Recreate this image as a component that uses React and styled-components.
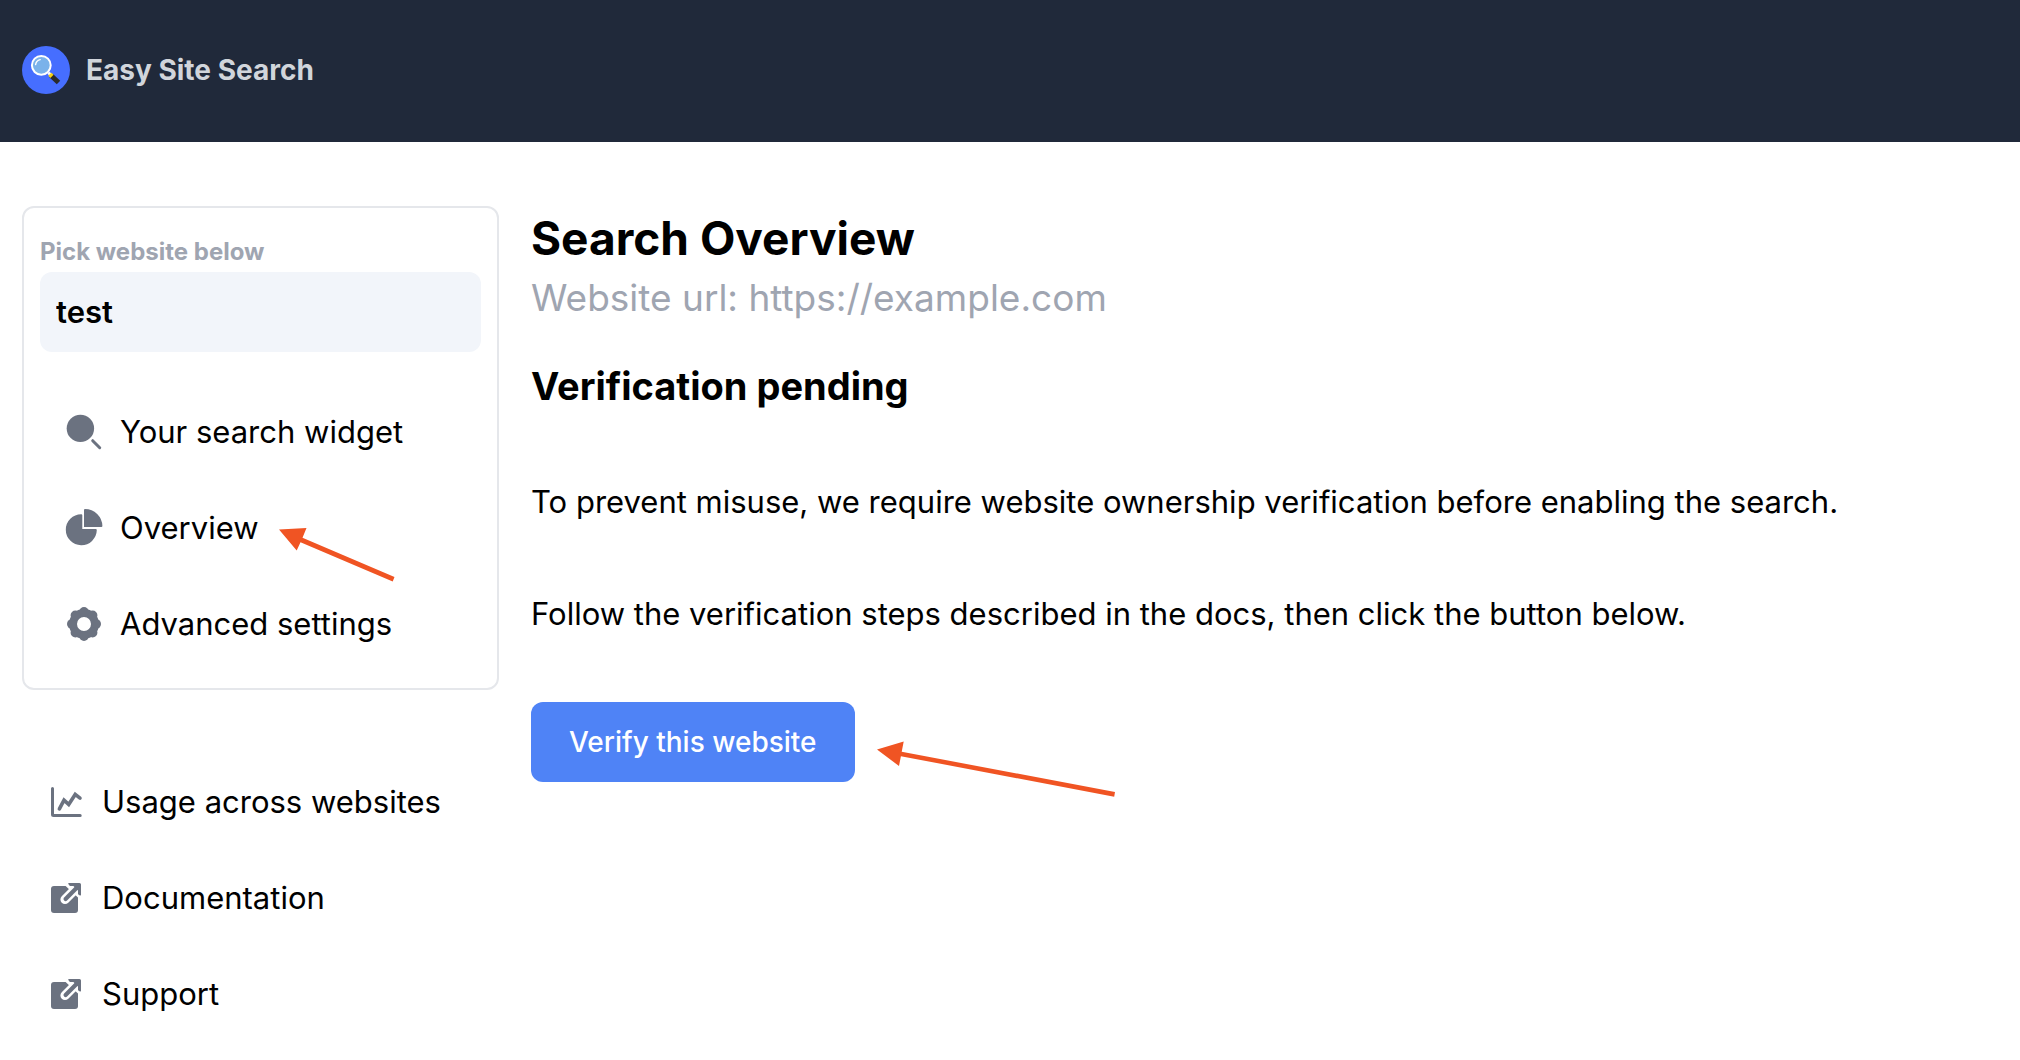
import React, {useState} from 'react';
// style
import styled, {createGlobalStyle} from 'styled-components';

const App = () => {
    const [website, setWebsite] = useState('test');

    return (
        <>
            <GlobalStyle />
            <Header>
                <Brand href="#">
                    <Logo />
                    <span>Easy Site Search</span>
                </Brand>
            </Header>
            <Page>
                <Sidebar>
                    <Card>
                        <Label htmlFor="website">Pick website below</Label>
                        <Select id="website" value={website} onChange={(e) => setWebsite(e.target.value)}>
                            <option value="test">test</option>
                        </Select>
                        <Nav aria-label="Website">
                            <NavLink href="#widget">
                                <SearchIcon />
                                Your search widget
                            </NavLink>
                            <NavLink href="#overview">
                                <PieIcon />
                                <Pointed>
                                    Overview
                                    <SmallArrow />
                                </Pointed>
                            </NavLink>
                            <NavLink href="#settings">
                                <GearIcon />
                                Advanced settings
                            </NavLink>
                        </Nav>
                    </Card>
                    <nav aria-label="Account">
                        <NavLink href="#usage">
                            <ChartIcon />
                            Usage across websites
                        </NavLink>
                        <NavLink href="#docs">
                            <ExternalIcon />
                            Documentation
                        </NavLink>
                        <NavLink href="#support">
                            <ExternalIcon />
                            Support
                        </NavLink>
                    </nav>
                </Sidebar>
                <Main>
                    <Title>Search Overview</Title>
                    <Url>Website url: https://example.com</Url>
                    <Subtitle>Verification pending</Subtitle>
                    <Text>To prevent misuse, we require website ownership verification before enabling the search.</Text>
                    <Text>Follow the verification steps described in the docs, then click the button below.</Text>
                    <Pointed>
                        <Button type="button">Verify this website</Button>
                        <LongArrow />
                    </Pointed>
                </Main>
            </Page>
        </>
    );
};

// Icons
const Logo = () => (
    <svg width="48" height="48" viewBox="0 0 48 48" aria-hidden="true">
        <circle cx="24" cy="24" r="24" fill="#466eff" />
        <path d="M29 29.5l7.5 7" stroke="#2b2b2b" strokeWidth="5" />
        <path d="M26.5 26.8l2 2" stroke="#fff" strokeWidth="3" />
        <path d="M27.8 28.2l2.2 2.2" stroke="#f5d216" strokeWidth="4.4" />
        <circle cx="19.3" cy="19.3" r="9.4" fill="#7ab2ea" stroke="#fff" strokeWidth="2" />
        <path d="M13.6 18.6a6 6 0 0 1 4.6-5" stroke="#fff" strokeWidth="1.4" fill="none" strokeLinecap="round" />
    </svg>
);

const SearchIcon = () => (
    <Icon viewBox="0 0 40 40" aria-hidden="true">
        <circle cx="16.4" cy="16.4" r="13.7" />
        <path d="M28.7 28.7l7 7" stroke="currentColor" strokeWidth="3" strokeLinecap="round" />
    </Icon>
);

const PieIcon = () => (
    <Icon viewBox="0 0 40 40" aria-hidden="true">
        <path d="M17.2 6.2a1.1 1.1 0 0 1 1.1 1.1V21h13.4a1.1 1.1 0 0 1 1.1 1.1A15.5 15.5 0 1 1 17.2 6.2z" />
        <path d="M20 2a1 1 0 0 1 1-1 17.4 17.4 0 0 1 17.4 17 1 1 0 0 1-1 1H20z" />
    </Icon>
);

const GearIcon = () => (
    <Icon viewBox="0 0 40 40" aria-hidden="true">
        <circle cx="20" cy="20" r="11" fill="none" stroke="currentColor" strokeWidth="8" />
        {[0, 45, 90, 135, 180, 225, 270, 315].map((angle) => (
            <circle key={angle} cx="20" cy="7.800" r="4.800" transform={`rotate(${angle} 20 20)`} />
        ))}
    </Icon>
);

const ChartIcon = () => (
    <Icon viewBox="0 0 40 40" aria-hidden="true">
        <g fill="none" stroke="currentColor" strokeWidth="3" strokeLinecap="round" strokeLinejoin="round">
            <path d="M6.5 6.5v26a1 1 0 0 0 1 1h26.700" />
            <path d="M13.400 26.800l4.600-8.600 4.700 4.200L29.200 12.400l4.800 3.800" strokeWidth="3.600" strokeLinejoin="miter" />
        </g>
    </Icon>
);

const ExternalIcon = () => (
    <Icon viewBox="0 0 40 40" aria-hidden="true">
        <rect x="5" y="8" width="27" height="27" rx="3" />
        <path d="M19 21.5L33 7.5" stroke="#fff" strokeWidth="9.200" strokeLinecap="round" />
        <path d="M19.6 8h12.4v11.5z" fill="#fff" />
        <path d="M19.600 21L32 8.600" stroke="currentColor" strokeWidth="4.200" strokeLinecap="round" />
        <path d="M22.2 5h11.3a1.5 1.5 0 0 1 1.5 1.5v10.8q-2 .6-3-1.3v-3.4L27.400 8H24q-1.600-1-1.800-3z" />
    </Icon>
);

const SmallArrow = () => (
    <Arrow width="116" height="54" $top={24} $gap={20} viewBox="0 0 116 54" aria-hidden="true">
        <path d="M0 1.500L27.500 0l-4 9.800L115.500 49l-1.800 4.400L21.500 14.200 17.700 22.600z" />
    </Arrow>
);

const LongArrow = () => (
    <Arrow width="238" height="56" $top={39} $gap={22} viewBox="0 0 238 56" aria-hidden="true">
        <path d="M0 8.500L26.700 0.500l-2 10.300L238 51l-.8 4.700L23.900 15.200 22 25z" />
    </Arrow>
);

const GlobalStyle = createGlobalStyle`
    * {
        box-sizing: border-box;
        margin: 0;
        padding: 0;
    }
    body {
        background: #fff;
        color: #000;
        font-family: Inter, 'Liberation Sans', sans-serif;
        font-size: 31px;
        line-height: 48px;
    }
    a {
        color: inherit;
        text-decoration: none;
    }
`;

const Header = styled.header`
    padding: 46px 22px 48px;
    background: #20293a;
`;

const Brand = styled.a`
    display: inline-flex;
    align-items: center;
    gap: 16px;
    vertical-align: top;
    color: #d1d5db;
    font-size: 28px;
    font-weight: 700;
`;

const Page = styled.div`
    display: flex;
    align-items: flex-start;
    gap: 32px;
    padding: 64px 22px 0;
`;

const Sidebar = styled.aside`
    display: flex;
    flex-direction: column;
    flex: 0 0 477px;
    gap: 64px;
`;

const Card = styled.div`
    padding: 16px;
    border: 2px solid #e5e7eb;
    border-radius: 12px;
`;

const Label = styled.label`
    display: block;
    padding-top: 8px;
    color: #9fa5b1;
    font-size: 24px;
    font-weight: 700;
    line-height: 40px;
`;

const Select = styled.select`
    display: block;
    width: 100%;
    height: 80px;
    padding: 0 16px;
    appearance: none;
    border: none;
    border-radius: 12px;
    background: #f2f5fa;
    color: #000;
    font: inherit;
    font-weight: 600;
`;

const Nav = styled.nav`
    margin-top: 32px;
`;

const NavLink = styled.a`
    display: flex;
    align-items: center;
    gap: 16px;
    height: 96px;
    padding: 0 24px;
    white-space: nowrap;
`;

const Icon = styled.svg`
    flex: none;
    width: 40px;
    height: 40px;
    color: #6b7280;
    fill: currentColor;
`;

const Main = styled.main`
    flex: 1;
    min-width: 0;
`;

const Title = styled.h1`
    font-size: 46px;
    font-weight: 700;
    line-height: 64px;
`;

const Url = styled.p`
    color: #9fa5b1;
    font-size: 37px;
    line-height: 56px;
`;

const Subtitle = styled.h2`
    margin-top: 32px;
    font-size: 38px;
    font-weight: 700;
    line-height: 56px;
`;

const Text = styled.p`
    margin: 64px 0;
`;

const Button = styled.button`
    display: block;
    height: 80px;
    padding: 0 38px;
    border: none;
    border-radius: 12px;
    background: #4f83f6;
    color: #fff;
    font: inherit;
    font-size: 28px;
    font-weight: 500;
    cursor: pointer;
`;

// holds an item and the arrow that points at it
const Pointed = styled.span`
    display: inline-block;
    position: relative;
`;

const Arrow = styled.svg`
    position: absolute;
    top: ${(props) => props.$top}px;
    left: 100%;
    margin-left: ${(props) => props.$gap}px;
    fill: #f05423;
    pointer-events: none;
`;

export default App;
